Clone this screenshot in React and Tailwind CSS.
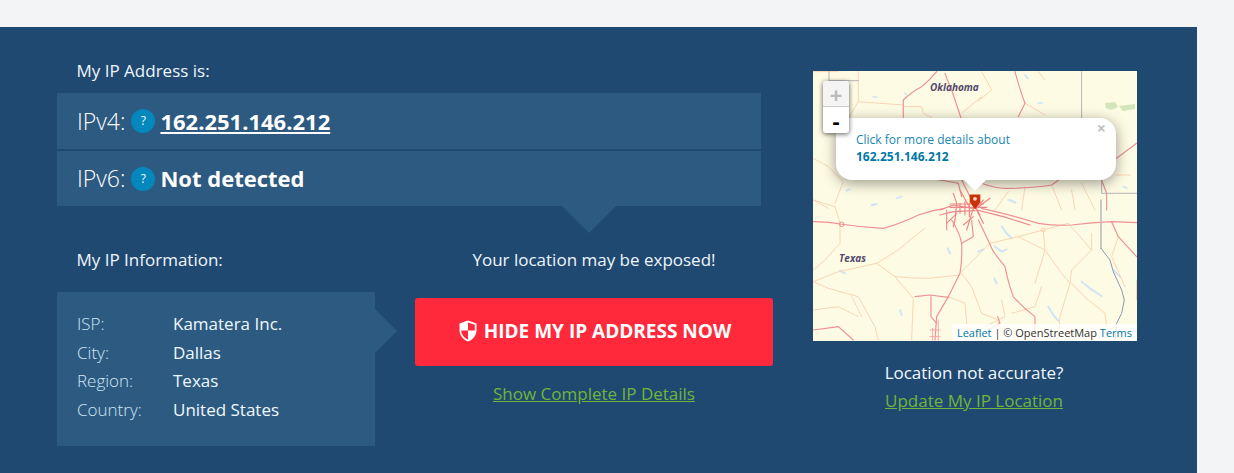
import React from 'react';

// road traces are written in the coordinates of crops of the map, then scaled down into it
const northRed = [
  'M295 120 Q320 95 350 80 Q375 60 395 35',
  'M295 120 L295 172',
  'M420 40 Q430 70 440 90 Q452 125 460 150 L470 180',
  'M630 35 Q645 90 660 130 L640 170',
  'M470 360 L490 400 L500 420',
  'M530 370 Q570 385 600 385 Q680 385 740 375 L790 340',
  'M400 360 Q440 365 460 370 L470 410',
  'M935 295 L995 250',
  'M890 360 L905 400 L905 450',
];

const northOrange = [
  'M295 140 L350 140 L355 160 L380 172',
  'M160 35 L160 125 L295 135',
  'M25 295 L70 320 L115 365 L90 430',
  'M470 160 L530 110 L520 125',
  'M935 345 L975 345',
  'M800 390 L810 450',
  'M830 370 L870 450',
  'M660 380 L650 450',
  'M25 35 L100 35',
  'M530 35 L560 90 L530 115',
  'M660 130 L720 165',
  'M160 125 L130 175',
  'M720 60 L700 35',
  'M570 450 L610 395',
  'M740 375 L770 450',
  'M25 420 L70 445',
];

const southRed = [
  'M25 65 Q60 65 105 72 Q170 82 235 85 Q290 70 340 45 Q380 30 420 25',
  'M530 25 Q620 45 700 70 Q750 78 800 75 Q860 68 920 65 L995 68',
  'M440 60 Q465 100 470 130 Q472 180 465 220 L430 290 L395 350 L390 420',
  'M520 60 Q540 100 565 155 L600 200 Q610 250 625 290 Q650 320 690 350 L690 420',
  'M920 65 L940 110 L995 170',
  'M470 130 L505 110 L500 60',
  'M25 390 L100 380 L145 420',
  'M425 30 L425 90',
  'M378 290 L378 350 L395 370',
  'M560 385 L585 370 L578 350',
  'M330 290 L375 285 L430 292',
];

const southOrange = [
  'M360 85 Q320 115 280 150 L215 190',
  'M215 190 L270 230 L325 295 L320 420',
  'M270 230 Q320 235 370 235 L465 225',
  'M25 245 L70 265 L160 290 L210 380 L220 420',
  'M215 190 L100 215 L25 245',
  'M470 215 L555 130 L640 110 L715 90 L790 70',
  'M640 110 L720 150 L770 220 L795 250 L765 350 L760 420',
  'M790 70 L860 150 L800 210 L795 250',
  'M860 150 L860 100',
  'M470 220 L500 260 L530 340 L580 360 L590 420',
  'M90 20 L105 70 L105 130 L60 180 L25 210',
  'M25 0 L90 20',
  'M800 250 L850 300 L900 340 L910 420',
  'M715 90 L720 150 L690 250',
  'M430 290 L480 310 L490 420',
  'M620 340 L690 320 L710 260',
  'M940 110 L920 170 L960 260',
  'M995 300 L995 240',
  'M590 300 L600 350 L540 380',
  'M140 290 L170 350',
  'M25 330 L100 320 L160 350',
];

// the roads that run out of Dallas, from a closer crop
const cityRoads = [
  'M0 90 L40 75 L100 85',
  'M0 105 L40 95 L105 92',
  'M40 40 L50 70 L45 120',
  'M100 85 L80 150',
  'M130 60 L108 85',
  'M150 55 L110 85',
  'M60 30 L90 85',
  'M110 90 L130 130',
  'M110 90 L190 110 L270 135',
  'M20 130 L50 100',
  'M60 70 L60 100 M75 65 L75 105 M30 72 L130 72',
  'M95 60 L120 105',
  'M30 82 H140 M88 70 V110',
  'M45 120 L40 140 M100 110 L70 135',
];

// small lakes, as short fat strokes
const northLakes = ['M700 130 L712 128', 'M205 110 L215 112', 'M300 100 L304 104', 'M125 392 L135 388', 'M203 435 L215 432', 'M275 415 L290 410', 'M610 420 L630 428', 'M660 45 L668 55', 'M955 380 L965 384', 'M440 300 L450 303'];
const southLakes = ['M590 80 L605 100 L620 115', 'M570 140 L590 155 L605 148', 'M830 245 L855 265 L890 288', 'M730 320 L745 345 L760 362', 'M285 330 L290 345', 'M428 145 L435 160', 'M568 235 L575 250', 'M105 212 L120 220', 'M200 15 L212 12', 'M615 0 L632 8', 'M925 210 L945 230', 'M520 155 L535 148'];

const MapArt = () => (
  <svg width="324" height="270" viewBox="0 0 324 270" className="block">
    <rect width="324" height="270" fill="#fdfbe3" />
    <path d="M292 32 L302 31 L305 36 L298 39 L293 37 Z M306 35 L322 33 L322 38 L310 40 Z" fill="#d3e5ba" />
    <g transform="translate(-8 -11) scale(0.3333)" fill="none" strokeLinecap="round" strokeLinejoin="round">
      {northLakes.map((d, i) => <path key={i} d={d} stroke="#d5e9f5" strokeWidth="6" />)}
      {northOrange.map((d, i) => <path key={i} d={d} stroke="#f8d5b5" strokeWidth="3" />)}
      {northRed.map((d, i) => <path key={i} d={d} stroke="#f09093" strokeWidth="3.5" />)}
      {/* state lines */}
      <path d="M830 35 V175 M890 360 V400 H995 M72 35 V62 H160" stroke="#b5b5b5" strokeWidth="3" />
    </g>
    <g transform="translate(-8 129) scale(0.3333)" fill="none" strokeLinecap="round" strokeLinejoin="round">
      {southLakes.map((d, i) => <path key={i} d={d} stroke="#cfe5f5" strokeWidth="6" />)}
      {southOrange.map((d, i) => <path key={i} d={d} stroke="#f8d5b5" strokeWidth="3" />)}
      {southRed.map((d, i) => <path key={i} d={d} stroke="#f09093" strokeWidth="3.5" />)}
      <path d="M375 390 H405 M375 410 H405 M383 385 V420 M400 360 V420" stroke="#f4a9a9" strokeWidth="3" />
      <circle cx="110" cy="73" r="7" stroke="#f09093" strokeWidth="3" />
      <circle cx="715" cy="90" r="6" stroke="#f8d5b5" strokeWidth="3" />
      <path d="M888 0 V145" stroke="#bdbdbd" strokeWidth="5" />
      <path d="M888 145 L915 180 L925 215 L950 270 L958 300 L950 340 L935 370 L930 420" stroke="#8b98b0" strokeWidth="3" />
    </g>
    <g transform="translate(127 109) scale(0.3333)" fill="none" strokeLinecap="round" strokeLinejoin="round">
      {cityRoads.map((d, i) => <path key={i} d={d} stroke="#ee8588" strokeWidth="3.5" />)}
    </g>
    <text x="117" y="20" fontFamily="'Open Sans', sans-serif" fontSize="10" fontWeight="700" fontStyle="italic" fill="#54486f">
      Oklahoma
    </text>
    <text x="26" y="191" fontFamily="'Open Sans', sans-serif" fontSize="10" fontWeight="700" fontStyle="italic" fill="#54486f">
      Texas
    </text>
  </svg>
);

const HelpDot = () => (
  <span className="flex h-6 w-6 shrink-0 items-center justify-center rounded-full bg-[#0487bd] text-xs text-white">?</span>
);

const InfoRow = ({ label, value }) => (
  <div className="flex h-[28.4px] items-center">
    <span className="w-24 font-light text-[#cfe6f5]">{label}</span>
    <span className="text-[#f0f8ff]">{value}</span>
  </div>
);

const App = () => {
  return (
    <div className="h-[473px] w-[1234px] overflow-hidden bg-[#f3f4f6] pt-[27px] font-['Open_Sans',sans-serif]">
      <div className="flex h-[446px] w-[1197px] bg-[#204972] pl-[57px]">
        {/* left side */}
        <div className="w-[716px] shrink-0">
          <p className="flex h-[66px] items-end pb-2.5 pl-[19.5px] text-[17px] leading-6 text-[#eef6fc]">My IP Address is:</p>
          <div className="w-[704px]">
            <div className="flex h-14 items-center gap-1.5 bg-[#2d5a81] pl-5 text-[22px]">
              <span className="text-[23px] font-light text-white">IPv4:</span>
              <HelpDot />
              <a href="#" className="-ml-px font-bold text-white underline">162.251.146.212</a>
            </div>
            <div className="relative mt-0.5 flex h-[55px] items-center gap-1.5 bg-[#2d5a81] pl-5 text-[22px]">
              <span className="text-[23px] font-light text-white">IPv6:</span>
              <HelpDot />
              <span className="-ml-px font-bold text-white">Not detected</span>
              <span className="absolute top-full left-[505px] border-x-[27px] border-t-[27px] border-x-transparent border-t-[#2d5a81]"></span>
            </div>
          </div>
          <div className="flex pt-[42px]">
            <div className="w-[318px] shrink-0">
              <p className="pb-5 pl-[19.5px] text-[17px] leading-6 text-[#eef6fc]">My IP Information:</p>
              <div className="relative h-[154px] bg-[#2d5a81] pt-[18px] pl-5 text-[17px]">
                <InfoRow label="ISP:" value="Kamatera Inc." />
                <InfoRow label="City:" value="Dallas" />
                <InfoRow label="Region:" value="Texas" />
                <InfoRow label="Country:" value="United States" />
                <span className="absolute top-[17px] left-full border-y-[22px] border-l-[22px] border-y-transparent border-l-[#2d5a81]"></span>
              </div>
            </div>
            <div className="ml-10 w-[358px] text-center">
              <p className="pb-[26px] text-[17px] leading-6 text-[#eef6fc]">Your location may be exposed!</p>
              <a href="#" className="flex h-[68px] items-center justify-center gap-[7px] rounded-[3px] bg-[#ff293b] pb-0.5 pl-0.5 text-[19px] font-bold text-white">
                <svg width="18" height="22" viewBox="0 0 18 22">
                  <path d="M9 0.5 L17.5 3.5 V10 C17.5 15.5 14 19.5 9 21.5 C4 19.5 0.5 15.5 0.5 10 V3.5 Z" fill="#fff" />
                  <path d="M9 2.5 L15.8 4.8 V10.5 H9 Z M9 10.5 V19.6 C5.2 18 2.4 14.8 2.2 10.5 Z" fill="#ff293b" />
                </svg>
                HIDE MY IP ADDRESS NOW
              </a>
              <a href="#" className="mt-4 inline-block text-[17px] leading-6 text-[#6fb53a] underline">Show Complete IP Details</a>
            </div>
          </div>
        </div>

        {/* map side */}
        <div className="ml-10 w-[324px] shrink-0 pt-11 text-center">
          <div className="relative h-[270px] w-[324px] overflow-hidden text-left">
            <MapArt />
            <div className="absolute top-[47px] left-[23px] h-[62px] w-[280px] rounded-2xl bg-white pt-[13px] pl-5 text-xs leading-[17px] text-[#0078a8] shadow-[0_3px_14px_rgba(0,0,0,0.4)]">
              <p className="opacity-90">Click for more details about</p>
              <p className="font-bold">162.251.146.212</p>
              <span className="absolute top-[2px] right-[10px] text-base leading-4 font-bold text-[#c3c3c3]">×</span>
            </div>
            <div className="absolute top-[109px] left-[151px] border-x-[11px] border-t-[11px] border-x-transparent border-t-white"></div>
            <svg width="12" height="16" viewBox="0 0 11 15" className="absolute top-[123px] left-[156px]">
              <path d="M0.5 0.5 H10.5 V7.5 L5.5 14.5 L0.5 7.5 Z" fill="#c8320b" />
              <circle cx="5.5" cy="4.5" r="1.8" fill="#f3d0c4" />
            </svg>
            <div className="absolute top-[10px] left-[10px] w-[26px] rounded-[3px] bg-white shadow-[0_1px_5px_rgba(0,0,0,0.65)]">
              <div className="flex h-[26px] items-center justify-center rounded-t-[3px] border-b border-[#ccc] bg-[#f4f4f4] text-[22px] leading-none font-bold text-[#bbb]">+</div>
              <div className="flex h-[26px] items-center justify-center text-[22px] leading-none font-bold text-black">-</div>
            </div>
            <div className="absolute right-0 bottom-0 h-[17px] bg-white/80 px-[5px] text-[11px] leading-[17px] text-[#333]">
              <span className="text-[#0078a8]">Leaflet</span> | © OpenStreetMap <span className="text-[#0078a8]">Terms</span>
            </div>
          </div>
          <p className="pt-[20px] pr-0.5 text-[17px] leading-6 text-[#f0f8ff]">Location not accurate?</p>
          <a href="#" className="mt-1 mr-0.5 inline-block text-[17px] leading-6 text-[#6fb53a] underline">Update My IP Location</a>
        </div>
      </div>
    </div>
  );
};

export default App;
